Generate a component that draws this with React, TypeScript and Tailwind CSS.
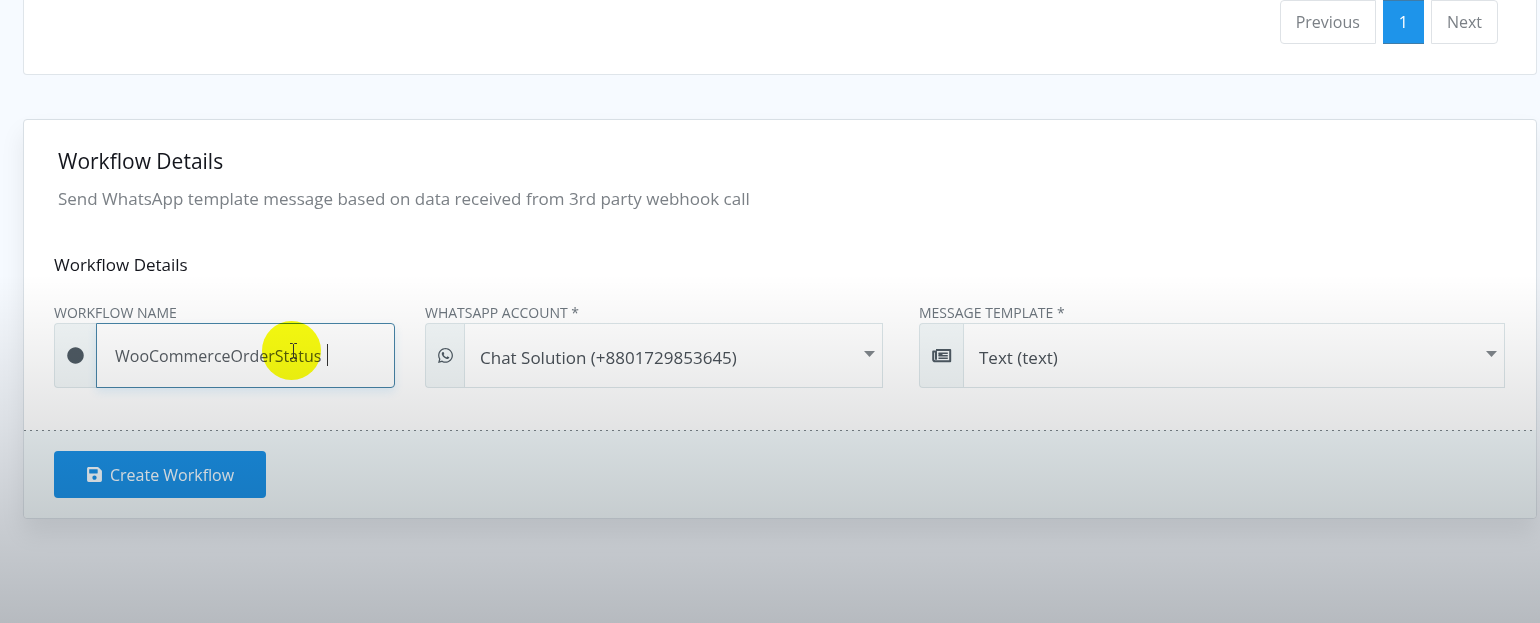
import { useState } from "react";
import type { ReactNode } from "react";
import { FaCircle, FaSave, FaWhatsapp } from "react-icons/fa";

interface FieldProps {
    id: string;
    label: string;
    icon: ReactNode;
    addonClass: string;
    children: ReactNode;
}

const accounts = ["Chat Solution (+8801729853645)"];
const templates = ["Text (text)"];

function NewspaperIcon() {
    return (
        <svg width="20" height="14" viewBox="0 0 20 14" fill="none" stroke="currentColor" strokeWidth="2" aria-hidden="true">
            <path d="M4 1h14.2v11.2H3.2c-1.2 0-2-.8-2-1.8V2.5H4v8.2" strokeLinejoin="round" />
            <path d="M6.5 4.2h9.3M6.5 6.8h9.3M6.5 9.3h9.3" strokeWidth="1.4" />
            <path d="M6.5 5.5h4" strokeWidth="2.4" />
        </svg>
    );
}

function Field({ id, label, icon, addonClass, children }: FieldProps) {
    return (
        <div>
            <label htmlFor={id} className="block text-[14px] leading-[21px] text-[#6c757d] uppercase">{label}</label>
            <div className="flex h-[65px]">
                <span className={`${addonClass} flex shrink-0 items-center justify-center rounded-l border border-r-0 border-[#dbe5e8] bg-[#f2f7f8] text-[#4e5a63]`}>
                    {icon}
                </span>
                {children}
            </div>
        </div>
    );
}

function SelectBox({ id, options }: { id: string; options: string[] }) {
    return (
        <div className="relative flex-1">
            <select
                id={id}
                className="h-full w-full appearance-none border border-[#dbe5e8] bg-white pt-1 pl-[15px] pr-10 text-[17px] text-[#495057] outline-none"
            >
                {options.map((option) => (
                    <option key={option}>{option}</option>
                ))}
            </select>
            <svg className="pointer-events-none absolute top-7 right-2 h-[6px] w-[11px] text-[#80868b]" viewBox="0 0 11 6">
                <path d="M0 0h11L5.5 6z" fill="currentColor" />
            </svg>
        </div>
    );
}

export default function App() {
    const [name, setName] = useState("WooCommerceOrderStatus");

    return (
        <div className="relative min-h-screen overflow-hidden bg-[#f6faff] pr-[3px] pl-[23px] font-['Open_Sans','Noto_Sans',sans-serif]">
            <section className="rounded-b border border-t-0 border-[#dfe5ea] bg-white pr-[38px] pb-[30px]">
                <nav aria-label="Pagination" className="flex justify-end gap-[7px] text-[16px] text-[#7b8086]">
                    <button className="h-11 rounded-l border border-[#dee2e6] px-[15px]">Previous</button>
                    <button aria-current="page" className="h-11 w-[41px] border-y border-[#3f7ca8] bg-[#1e94ea] text-white">1</button>
                    <button className="h-11 rounded-r border border-[#dee2e6] px-[15px]">Next</button>
                </nav>
            </section>

            <section className="mt-11 rounded border border-[#d8dfe5] bg-white shadow-[0_14px_24px_rgba(0,0,0,0.08)]">
                <header className="px-[34px] pt-[27px]">
                    <h1 className="text-[21px] leading-7 text-[#14161d]">Workflow Details</h1>
                    <p className="mt-[10px] text-[17px] leading-7 text-[#7b8086]">
                        Send WhatsApp template message based on data received from 3rd party webhook call
                    </p>
                </header>

                <form>
                    <div className="pt-10 pr-[31px] pb-[42px] pl-[30px]">
                        <h2 className="text-[17px] leading-6 text-[#14161d]">Workflow Details</h2>
                        <div className="mt-[25px] grid grid-cols-[371fr_494fr_586fr]">
                            <div className="pr-[30px]">
                                <Field id="name" label="Workflow Name" icon={<FaCircle size={17} />} addonClass="w-[42px]">
                                    <div className="relative flex-1">
                                        <input
                                            id="name"
                                            value={name}
                                            onChange={(e) => setName(e.target.value)}
                                            className="h-full w-full rounded-r border border-[#4683a6] bg-white px-[18px] text-[16px] text-[#565c62] caret-transparent shadow-[0_4px_10px_rgba(30,148,234,0.12)] outline-none"
                                        />
                                        <span className="absolute top-[21px] left-[231px] h-[22px] w-px bg-[#333]" />
                                        <span className="pointer-events-none absolute -top-[2px] left-[166px] size-[59px] rounded-full bg-[#fbff10] mix-blend-multiply" />
                                        <svg className="pointer-events-none absolute top-5 left-[194px] h-4 w-[7px]" viewBox="0 0 7 16" fill="none" stroke="#333" strokeWidth="1">
                                            <path d="M0 .5h2.5l1 1 1-1H7M3.5 1.5v13M0 15.5h2.5l1-1 1 1H7" />
                                        </svg>
                                    </div>
                                </Field>
                            </div>
                            <div className="pr-9">
                                <Field id="account" label="WhatsApp Account *" icon={<FaWhatsapp size={17} />} addonClass="w-[39px]">
                                    <SelectBox id="account" options={accounts} />
                                </Field>
                            </div>
                            <Field id="template" label="Message Template *" icon={<NewspaperIcon />} addonClass="w-11">
                                <SelectBox id="template" options={templates} />
                            </Field>
                        </div>
                    </div>

                    <footer className="rounded-b bg-[#f2f9fb] px-[30px] pb-5">
                        <svg className="-mx-[30px] block h-px w-[calc(100%+60px)]" aria-hidden="true">
                            <line x1="0" y1="0.5" x2="100%" y2="0.5" stroke="#7b858a" strokeDasharray="2 4" />
                        </svg>
                        <button type="button" className="mt-5 flex h-[47px] items-center gap-[7px] rounded bg-[#1b92e8] px-8 text-[16px] text-[#f4fbff]">
                            <FaSave size={17} />
                            Create Workflow
                        </button>
                    </footer>
                </form>
            </section>

            {/* darkens towards the bottom of the screen */}
            <div className="pointer-events-none absolute inset-0 bg-[linear-gradient(to_bottom,transparent_44%,rgba(0,5,10,0.045)_54%,rgba(0,5,10,0.105)_68%,rgba(0,5,10,0.18)_83%,rgba(0,5,10,0.26)_100%)]" />
        </div>
    );
}
